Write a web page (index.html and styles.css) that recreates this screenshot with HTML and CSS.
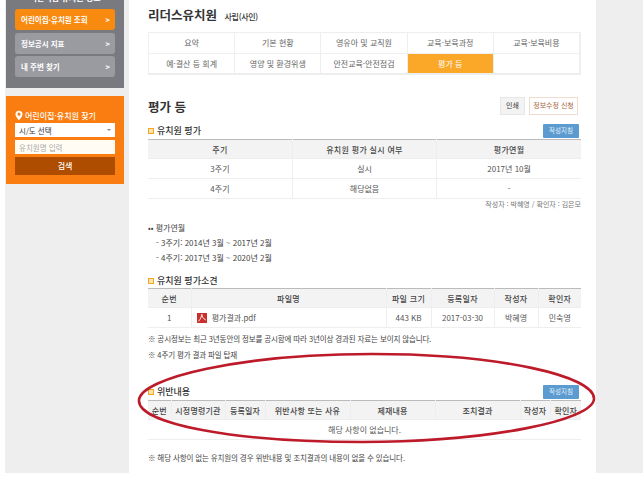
FILE: index.html
```html
<!DOCTYPE html>
<html lang="ko">
<head>
    <meta charset="UTF-8">
    <title>리더스유치원 - 평가 등</title>
    <link rel="stylesheet" href="styles.css">
</head>
<body>
    <div class="page">
        <div class="sidebar">
            <div class="side-nav">
                <div class="side-title">어린이집·유치원 정보</div>
                <a class="side-link active">어린이집·유치원 조회 <span>&gt;</span></a>
                <a class="side-link">정보공시 지표 <span>&gt;</span></a>
                <a class="side-link">내 주변 찾기 <span>&gt;</span></a>
            </div>
            <div class="finder">
                <div class="finder-title">
                    <svg class="pin" viewBox="0 0 10 13"><path d="M5 0.5a4.4 4.4 0 0 0-4.4 4.4C0.6 8 5 12.6 5 12.6S9.4 8 9.4 4.9A4.4 4.4 0 0 0 5 0.5zm0 6.2a1.9 1.9 0 1 1 0-3.8 1.9 1.9 0 0 1 0 3.8z" fill="#fff"/></svg>
                    어린이집·유치원 찾기
                </div>
                <div class="finder-select">시/도 선택 <i></i></div>
                <div class="finder-input">유치원명 입력</div>
                <div class="finder-btn">검색</div>
            </div>
        </div>

        <div class="main">
            <h1 class="kinder-name">리더스유치원 <small>사립(사인)</small></h1>

            <div class="tabs">
                <div class="tab">요약</div>
                <div class="tab">기본 현황</div>
                <div class="tab">영유아 및 교직원</div>
                <div class="tab">교육·보육과정</div>
                <div class="tab">교육·보육비용</div>
                <div class="tab">예·결산 등 회계</div>
                <div class="tab">영양 및 환경위생</div>
                <div class="tab">안전교육·안전점검</div>
                <div class="tab active">평가 등</div>
                <div class="tab"></div>
            </div>

            <div class="page-head">
                <h2>평가 등</h2>
                <div class="page-btns">
                    <span class="btn">인쇄</span>
                    <span class="btn btn-edit">정보수정 신청</span>
                </div>
            </div>

            <div class="sec-head sec-first">
                <h3><i class="bullet"></i>유치원 평가</h3>
                <span class="guide-btn">작성지침</span>
            </div>
            <table class="data t-eval">
                <tr><th>주기</th><th>유치원 평가 실시 여부</th><th>평가연월</th></tr>
                <tr><td>3주기</td><td>실시</td><td>2017년 10월</td></tr>
                <tr><td>4주기</td><td>해당없음</td><td>-</td></tr>
            </table>
            <p class="writer">작성자 : 박혜영 / 확인자 : 김은모</p>

            <p class="memo memo-first">•• 평가연월</p>
            <p class="memo memo-sub">- 3주기: 2014년 3월 ~ 2017년 2월</p>
            <p class="memo memo-sub">- 4주기: 2017년 3월 ~ 2020년 2월</p>

            <div class="sec-head sec-files">
                <h3><i class="bullet"></i>유치원 평가소견</h3>
            </div>
            <table class="data t-files">
                <tr><th>순번</th><th>파일명</th><th>파일 크기</th><th>등록일자</th><th>작성자</th><th>확인자</th></tr>
                <tr>
                    <td>1</td>
                    <td class="file-cell">
                        <svg class="pdf" viewBox="0 0 11 11"><rect width="11" height="11" fill="#c9302c"/><path d="M5.3 1.5C5 3.5 3.8 7 1.6 9.2M5.3 1.5C5.6 4 7 6.6 9.6 7.6" stroke="#fff" stroke-width="1" fill="none"/></svg>
                        평가결과.pdf
                    </td>
                    <td>443 KB</td><td>2017-03-30</td><td>박혜영</td><td>민숙영</td>
                </tr>
            </table>
            <p class="note note-first">※ 공시정보는 최근 3년동안의 정보를 공시함에 따라 3년이상 경과된 자료는 보이지 않습니다.</p>
            <p class="note">※ 4주기 평가 결과 파일 탑재</p>

            <div class="sec-head sec-viol">
                <h3><i class="bullet"></i>위반내용</h3>
                <span class="guide-btn">작성지침</span>
            </div>
            <table class="data t-viol">
                <tr><th>순번</th><th>시정명령기관</th><th>등록일자</th><th>위반사항 또는 사유</th><th>제재내용</th><th>조치결과</th><th>작성자</th><th>확인자</th></tr>
                <tr><td colspan="8">해당 사항이 없습니다.</td></tr>
            </table>
            <p class="note note-last">※ 해당 사항이 없는 유치원의 경우 위반내용 및 조치결과의 내용이 없을 수 있습니다.</p>
        </div>
        <div class="right-band"></div>
    </div>

    <svg class="ring" viewBox="0 0 643 478">
        <path d="M139 400C141 378 240 354 372 354C500 354 595 376 594 399C593 420 490 442 362 442C235 442 137 424 139 400Z" fill="none" stroke="#bd1a2a" stroke-width="2.6"/>
    </svg>
</body>
</html>
```

FILE: styles.css
```css
* {
    margin: 0;
    padding: 0;
    box-sizing: border-box;
}

html, body {
    height: 478px;
    overflow: hidden;
}

body {
    position: relative;
    background: #fff;
    font-family: "Noto Sans CJK KR", "Noto Sans", sans-serif;
    font-size: 8px;
    color: #555;
}

.page {
    display: flex;
    height: 473px;
    padding-left: 5px;
}

/* left column */
.sidebar {
    width: 124px;
    padding-left: 1px;
    padding-right: 5px;
    background: #eeeeee;
}

.side-nav {
    height: 88px;
    padding: 9px 9px 0;
    background: #797a80;
}

.side-title {
    height: 10px;
    margin-top: -17px;
    margin-bottom: 7px;
    color: #fff;
    font-weight: 700;
    text-align: center;
}

.side-link {
    display: flex;
    justify-content: space-between;
    align-items: center;
    height: 21px;
    margin-bottom: 2.5px;
    padding: 0 5px 0 6px;
    border-radius: 3px;
    background: #9a9ba0;
    color: #fff;
    font-weight: 700;
    font-size: 7.5px;
}

.side-link.active {
    background: #f98a10;
}

.finder {
    height: 88px;
    margin-top: 8px;
    padding: 11px 9px 0;
    background: #f97d10;
}

.finder-title {
    display: flex;
    align-items: center;
    gap: 2px;
    height: 16px;
    color: #fff;
    font-size: 8px;
    font-weight: 500;
}

.pin {
    width: 8px;
    height: 11px;
}

.finder-select, .finder-input {
    display: flex;
    justify-content: space-between;
    align-items: center;
    height: 14px;
    margin-bottom: 3px;
    padding: 0 4px;
    background: #fff;
    font-size: 7.5px;
    color: #333;
}

.finder-select i {
    border: 2px solid transparent;
    border-top-color: #888;
    margin-top: 2px;
}

.finder-input {
    background: #fffdf3;
    color: #aaa;
}

.finder-btn {
    height: 18px;
    line-height: 17px;
    background: #ae4d00;
    color: #fff;
    font-weight: 500;
    text-align: center;
}

/* content */
.main {
    width: 467px;
    padding: 0 15px 0 19px;
    background: #fff;
}

.right-band {
    width: 47px;
    background: #eeeeee;
}

.kinder-name {
    height: 32px;
    padding-top: 6px;
    font-size: 12.5px;
    line-height: 18px;
    color: #333;
}

.kinder-name small {
    margin-left: 4px;
    font-size: 8px;
    font-weight: 500;
    letter-spacing: -0.3px;
}

.tabs {
    display: grid;
    grid-template-columns: repeat(5, 1fr);
    grid-auto-rows: 20.5px;
    border: 1px solid #eeeeee;
}

.tab {
    border-right: 1px solid #eeeeee;
    border-bottom: 1px solid #eeeeee;
    line-height: 19px;
    text-align: center;
    color: #666;
}

.tab.active {
    background: #fba829;
    color: #fff;
}

.page-head {
    display: flex;
    justify-content: space-between;
    align-items: center;
    height: 18px;
    margin-top: 22px;
    padding-right: 3px;
}

.page-head h2 {
    font-size: 12.5px;
    color: #333;
}

.page-btns {
    display: flex;
    gap: 4px;
}

.btn {
    width: 25px;
    height: 18px;
    border: 1px solid #e6e6e6;
    background: #f3f3f3;
    line-height: 15px;
    text-align: center;
    font-size: 7px;
    color: #333;
}

.btn-edit {
    width: 49px;
    background: #fff;
    border-color: #eeddd0;
    color: #a9653c;
}

.sec-head {
    display: flex;
    justify-content: space-between;
    align-items: center;
    height: 15px;
    padding-right: 2px;
}

.sec-head h3 {
    display: flex;
    align-items: center;
    font-size: 9px;
    font-weight: 500;
    color: #333;
}

.sec-first {
    margin-top: 8px;
    margin-bottom: 1px;
}

.sec-files {
    margin-top: 9px;
    height: 13px;
    margin-bottom: 1px;
}

.sec-viol {
    margin-top: 21px;
    margin-bottom: 1px;
}

.bullet {
    width: 6px;
    height: 6px;
    margin-right: 3px;
    border: 1.5px solid #f5a623;
    background: #fde3b0;
}

.guide-btn {
    width: 36px;
    height: 14px;
    border-radius: 1px;
    background: #5b9bd0;
    line-height: 13px;
    text-align: center;
    font-size: 6.5px;
    color: #e8f2fa;
}

.data {
    width: 100%;
    table-layout: fixed;
    border-collapse: collapse;
    border-top: 1px solid #bbb;
}

.data th, .data td {
    height: 20px;
    border-bottom: 1px solid #eeeeee;
    border-left: 1px solid #eeeeee;
    text-align: center;
    font-size: 8px;
    font-weight: 400;
    white-space: nowrap;
    overflow: hidden;
}

.data th {
    height: 19px;
    background: #f3f3f3;
    font-weight: 500;
    letter-spacing: 0.3px;
    color: #444;
}

.data th:first-child, .data td:first-child {
    border-left: 0;
}

.t-files th:nth-child(1) { width: 43px; }
.t-files th:nth-child(2) { width: 195px; }
.t-files th:nth-child(3) { width: 45px; }
.t-files th:nth-child(4) { width: 63px; }
.t-files th:nth-child(5) { width: 44px; }

.t-viol th {
    letter-spacing: 0.2px;
}

.t-viol th:nth-child(1) { width: 23px; }
.t-viol th:nth-child(2) { width: 54px; }
.t-viol th:nth-child(3) { width: 40px; }
.t-viol th:nth-child(4) { width: 85px; }
.t-viol th:nth-child(5) { width: 85px; }
.t-viol th:nth-child(6) { width: 85px; }
.t-viol th:nth-child(7) { width: 30px; }

.data td.file-cell {
    padding-left: 5px;
    text-align: left;
}

.pdf {
    width: 10px;
    height: 10px;
    margin-right: 3px;
    vertical-align: -2px;
}

.writer {
    margin-top: -1px;
    height: 12px;
    line-height: 12px;
    text-align: right;
    font-size: 7px;
    color: #777;
}

.memo {
    height: 15px;
    line-height: 15px;
    font-size: 8px;
    color: #444;
}

.memo-first {
    margin-top: 10px;
}

.memo-sub {
    padding-left: 8px;
}

.note {
    height: 16px;
    line-height: 16px;
    font-size: 7.5px;
    letter-spacing: -0.12px;
    color: #444;
}

.note-first {
    margin-top: 3px;
}

.note-last {
    margin-top: 10px;
}

/* red ring drawn over the page */
.ring {
    position: absolute;
    left: 0;
    top: 0;
    width: 643px;
    height: 478px;
    pointer-events: none;
}
```
